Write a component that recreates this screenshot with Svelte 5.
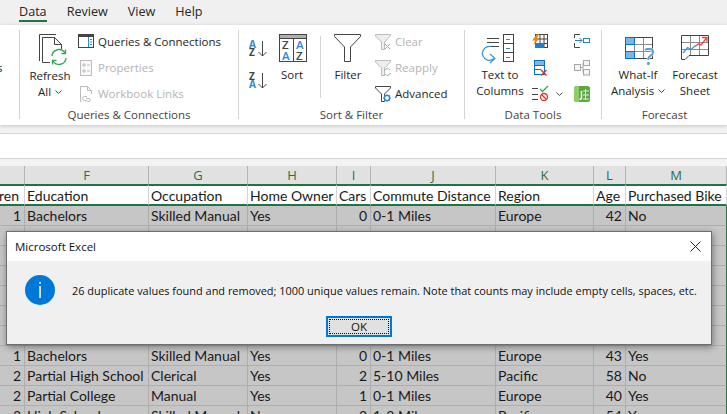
<script lang="ts">
	const letters = ['', 'F', 'G', 'H', 'I', 'J', 'K', 'L', 'M'];
	const header = ['Children', 'Education', 'Occupation', 'Home Owner', 'Cars', 'Commute Distance', 'Region', 'Age', 'Purchased Bike'];
	const blank = ['', '', '', '', '', '', '', '', ''];
	const rows = [
		['1', 'Bachelors', 'Skilled Manual', 'Yes', '0', '0-1 Miles', 'Europe', '42', 'No'],
		blank, blank, blank, blank, blank, blank,
		['1', 'Bachelors', 'Skilled Manual', 'Yes', '0', '0-1 Miles', 'Europe', '43', 'Yes'],
		['2', 'Partial High School', 'Clerical', 'Yes', '2', '5-10 Miles', 'Pacific', '58', 'No'],
		['2', 'Partial College', 'Manual', 'Yes', '1', '0-1 Miles', 'Europe', '40', 'Yes'],
		['3', 'High School', 'Skilled Manual', 'No', '2', '1-2 Miles', 'Pacific', '54', 'Yes']
	];
	// children, cars and age are right aligned
	const numeric = [0, 4, 7];
</script>

{#snippet chevron()}
	<svg class="chev" width="7" height="4" viewBox="0 0 7 4"><path d="M.5.5l3 3 3-3" fill="none" stroke="#444" /></svg>
{/snippet}

<div class="page">
	<nav class="tabs">
		<span class="tab active">Data</span>
		<span class="tab">Review</span>
		<span class="tab">View</span>
		<span class="tab">Help</span>
	</nav>

	<section class="ribbon">
		<div class="group cut"><span class="cut-text">s</span></div>

		<div class="group g1">
			<div class="body">
				<div class="big refresh">
					<svg width="40" height="38" viewBox="30 30 40 38">
						<g fill="none" stroke="#444">
							<path d="M39.5 61V34.5H56" />
							<path d="M42.5 62.5V37.5H54.5L61.5 44.5V49M54.5 37.5V44.5H61.5M42.5 62.5H50" />
						</g>
						<g fill="none" stroke="#3da35d" stroke-width="1.4">
							<path d="M52 56A7 7 0 0 1 65 53" />
							<path d="M66 58A7 7 0 0 1 53 61" />
							<path d="M65.5 49.5V53.5H61.5" />
							<path d="M52.5 64.5V60.5H56.5" />
						</g>
					</svg>
					<span>Refresh</span>
					<span>All {@render chevron()}</span>
				</div>
				<div class="small">
					<div class="item">
						<svg width="16" height="16" viewBox="0 0 16 16">
							<rect x=".5" y=".5" width="15" height="13" fill="#fff" stroke="#444" />
							<path d="M0 2h16" stroke="#444" stroke-width="2" />
							<path d="M10.5 3v10" stroke="#2b88d8" />
							<path d="M12 5.5h2M12 8h2M12 10.5h2" stroke="#2b88d8" />
						</svg>
						<span>Queries &amp; Connections</span>
					</div>
					<div class="item off">
						<svg width="16" height="16" viewBox="0 0 16 16">
							<rect x="2.5" y=".5" width="11" height="15" fill="#fafafa" stroke="#bbb" />
							<path d="M5 4h2v2H5zM5 10h2v2H5z" fill="none" stroke="#bbb" />
							<path d="M9 5h3M9 11h3" stroke="#bbb" />
						</svg>
						<span>Properties</span>
					</div>
					<div class="item off">
						<svg width="16" height="16" viewBox="0 0 16 16">
							<path d="M3.5 15.5H2.5V.5H9.5L13.5 4.5V8M9.5.5V4.5H13.5" fill="none" stroke="#bbb" />
							<path d="M9 10.5H6.5a2 2 0 0 0 0 4H9M8 12.5h3.5a2 2 0 0 1 0 3H9" fill="none" stroke="#bbb" />
						</svg>
						<span>Workbook Links</span>
					</div>
				</div>
			</div>
			<div class="label">Queries &amp; Connections</div>
		</div>

		<div class="group g2">
			<div class="body">
				<div class="sort-col">
					<svg width="18" height="19" viewBox="0 0 18 19">
						<text x="0" y="8" class="az blue">A</text>
						<text x="0" y="16" class="az dark">Z</text>
						<path d="M13.5 1v15M9.5 12l4 4 4-4" fill="none" stroke="#444" />
					</svg>
					<svg width="18" height="19" viewBox="0 0 18 19">
						<text x="0" y="8" class="az dark">Z</text>
						<text x="0" y="16" class="az blue">A</text>
						<path d="M13.5 1v15M9.5 12l4 4 4-4" fill="none" stroke="#444" />
					</svg>
				</div>
				<div class="big sort">
					<svg width="32" height="37" viewBox="276 30 32 37">
						<rect x="279.5" y="34.5" width="27" height="27" fill="#fff" stroke="#444" />
						<rect x="280" y="35" width="26" height="3" fill="#b0b0b0" />
						<path d="M293.5 38v23M280 38.5h26" stroke="#444" />
						<text x="282" y="49" class="az2 dark">Z</text>
						<text x="282" y="60" class="az2 blue">A</text>
						<text x="296" y="49" class="az2 blue">A</text>
						<text x="296" y="60" class="az2 dark">Z</text>
					</svg>
					<span>Sort</span>
				</div>
				<div class="vsep"></div>
				<div class="big filter">
					<svg width="32" height="37" viewBox="332 30 32 37">
						<path d="M334.5 34.5H360.5V36.5L350.5 47V61.5H344.5V47L334.5 36.5Z" fill="#fff" stroke="#444" />
					</svg>
					<span>Filter</span>
				</div>
				<div class="small filter-col">
					<div class="item off">
						<svg width="16" height="16" viewBox="0 0 16 16">
							<path d="M.5.5H15.5V2L9.5 8V15.5H6.5V8L.5 2Z" fill="#eee" stroke="#bbb" />
							<path d="M10 10l5 5M15 10l-5 5" stroke="#aaa" />
						</svg>
						<span>Clear</span>
					</div>
					<div class="item off">
						<svg width="16" height="16" viewBox="0 0 16 16">
							<path d="M.5.5H15.5V2L9.5 8V15.5H6.5V8L.5 2Z" fill="#eee" stroke="#bbb" />
							<path d="M9.5 11a3 3 0 0 1 5.5-1M15.5 13a3 3 0 0 1-5.5 1" fill="none" stroke="#aaa" />
						</svg>
						<span>Reapply</span>
					</div>
					<div class="item">
						<svg width="16" height="16" viewBox="0 0 16 16">
							<path d="M.5.5H15.5V2L9.5 8V15.5H6.5V8L.5 2Z" fill="#fff" stroke="#444" />
							<circle cx="12" cy="12" r="2.6" fill="#fff" stroke="#2b88d8" stroke-width="1.3" />
							<path d="M12 8v2M12 14v2M8 12h2M14 12h2M9.200 9.200l1.400 1.400M13.400 13.400l1.400 1.400M14.800 9.200l-1.400 1.400M10.600 13.400l-1.400 1.400" stroke="#2b88d8" />
						</svg>
						<span>Advanced</span>
					</div>
				</div>
			</div>
			<div class="label">Sort &amp; Filter</div>
		</div>

		<div class="group g3">
			<div class="body">
				<div class="big ttc">
					<svg width="60" height="37" viewBox="470 30 60 37">
						<path d="M487 38.5h12M487 42.5h12M487 46.5h12" stroke="#444" />
						<rect x="503.5" y="34.5" width="10" height="27" fill="#fff" stroke="#444" />
						<path d="M503 43.5h10M503 52.5h10" stroke="#444" />
						<path d="M506 39.5h4M506 48.5h4M506 57.5h4" stroke="#2b88d8" />
						<path d="M491 46.5C484 46 481 52 483 56C485 60 489 62 494 58.5M490 54L495 58.5L490 63" fill="none" stroke="#3d94dc" stroke-width="1.2" />
					</svg>
					<span>Text to</span>
					<span>Columns</span>
				</div>
				<div class="small tools">
					<div class="item">
						<svg width="16" height="16" viewBox="0 0 16 16">
							<rect x="3.5" y=".5" width="12" height="13" fill="#fff" stroke="#444" />
							<path d="M3.5 5h12M3.5 9.5h12M8 .5v13M12 .5v13" stroke="#444" />
							<rect x="3" y="9" width="9" height="5" fill="#1f7fcf" />
							<path d="M5 0L0 6.500h3L1.500 11L7.500 4.500H5L7 0Z" fill="#e8890c" />
						</svg>
					</div>
					<div class="item">
						<svg width="16" height="16" viewBox="0 0 16 16">
							<rect x="2.500" y=".5" width="10" height="14" fill="#fff" stroke="#0b6fc2" />
							<rect x="3" y="1" width="9" height="4" fill="#7fb4e6" />
							<path d="M3 5.500h9M3 9.500h6" stroke="#0b6fc2" />
							<path d="M9 10l5.500 5.500M14.500 10L9 15.500" stroke="#d9342b" stroke-width="1.400" />
						</svg>
					</div>
					<div class="item validate">
						<svg width="18" height="16" viewBox="0 0 18 16">
							<path d="M0 2.500h6M0 8.500h6M0 13.500h6" stroke="#444" />
							<path d="M8 3L10.500 5.500L16 0" fill="none" stroke="#3da35d" stroke-width="1.300" />
							<circle cx="12" cy="11" r="3.500" fill="#fff" stroke="#d9342b" stroke-width="1.300" />
							<path d="M9.500 8.500L14.500 13.500" stroke="#d9342b" stroke-width="1.300" />
						</svg>
						{@render chevron()}
					</div>
				</div>
				<div class="small tools2">
					<div class="item">
						<svg width="16" height="16" viewBox="0 0 16 16">
							<path d="M6 .5H.5V4M.5 9v4.500H6" fill="none" stroke="#444" />
							<path d="M1 6.500h7M5.500 4L8 6.500L5.500 9" fill="none" stroke="#1f7fcf" />
							<rect x="9.500" y="4.500" width="6" height="4" fill="#fff" stroke="#1f7fcf" />
						</svg>
					</div>
					<div class="item">
						<svg width="16" height="16" viewBox="0 0 16 16">
							<g fill="#f4f4f4" stroke="#a6a6a6">
								<rect x=".5" y="4.500" width="6" height="6" />
								<rect x="9.500" y=".5" width="6" height="5" />
								<rect x="9.500" y="9.500" width="6" height="5.500" />
							</g>
							<path d="M7 7.500h2M9 3v9.500" stroke="#a6a6a6" />
						</svg>
					</div>
					<div class="item">
						<svg width="16" height="16" viewBox="0 0 16 16">
							<rect width="16" height="16" rx="2.500" fill="#5aa83f" />
							<path d="M0 3Q0 0 3 0H5V16H3Q0 16 0 13Z" fill="#8ccf6a" />
							<path d="M9 5h6M9 9h6M9 13h6M11.500 3v11" stroke="#dff0d4" />
							<path d="M7.500 5V11.500Q7.500 13.500 5.500 13.500" fill="none" stroke="#fff" stroke-width="1.500" />
						</svg>
					</div>
				</div>
			</div>
			<div class="label">Data Tools</div>
		</div>

		<div class="group g4">
			<div class="body">
				<div class="big whatif">
					<svg width="60" height="37" viewBox="608 30 60 37">
						<rect x="625.500" y="37.500" width="27" height="21" fill="#fff" stroke="#444" />
						<path d="M634.500 38v20M643.500 38v20M626 44.500h26M626 51.500h26" stroke="#8a8a8a" />
						<rect x="625.500" y="37.500" width="9" height="7" fill="#7fb4e6" stroke="#0b6fc2" />
						<rect x="625.500" y="51.500" width="9" height="7" fill="#7fb4e6" stroke="#0b6fc2" />
						<text x="644" y="65" class="ask">?</text>
					</svg>
					<span>What-If</span>
					<span>Analysis {@render chevron()}</span>
				</div>
				<div class="big forecast">
					<svg width="54" height="37" viewBox="668 30 54 37">
						<path d="M681.500 35.500H708.500V55.500H689L685 59.500H681.500Z" fill="#fff" stroke="#444" />
						<path d="M690.500 36v19M699.500 36v19M682 42.500h26M682 49.500h26" stroke="#8a8a8a" />
						<path d="M683 53L687.500 47.500L691 49.500L695 46" fill="none" stroke="#3d94dc" stroke-width="1.300" />
						<path d="M695 46.500L699 43.500L701 45L706.500 38M702 37.500H707V42.500" fill="none" stroke="#e8483f" stroke-width="1.300" />
					</svg>
					<span>Forecast</span>
					<span>Sheet</span>
				</div>
			</div>
			<div class="label">Forecast</div>
		</div>
	</section>

	<div class="formula"></div>

	<div class="sheet">
		{#each letters as letter}
			<div class="letter">{letter}</div>
		{/each}
		{#each header as title, i}
			<div class="cell head" class:first={i === 0}><span>{title}</span></div>
		{/each}
		{#each rows as row}
			{#each row as value, i}
				<div class="cell sel" class:num={numeric.includes(i)}>{value}</div>
			{/each}
		{/each}
	</div>

	<div class="dialog">
		<div class="title">
			<span>Microsoft Excel</span>
			<svg width="11" height="11" viewBox="0 0 11 11"><path d="M.5.5l10 10M10.500.5l-10 10" stroke="#222" /></svg>
		</div>
		<div class="content">
			<div class="message">
				<svg width="30" height="30" viewBox="0 0 30 30">
					<circle cx="15" cy="15" r="15" fill="#0078d7" />
					<rect x="14.300" y="7" width="1.500" height="1.700" fill="#fff" />
					<rect x="14.300" y="11" width="1.500" height="12" fill="#fff" />
				</svg>
				<p>26 duplicate values found and removed; 1000 unique values remain. Note that counts may include empty cells, spaces, etc.</p>
			</div>
			<button class="ok"><span>OK</span></button>
		</div>
	</div>
</div>

<style>
	:global(body) {
		margin: 0;
	}

	.page {
		position: relative;
		width: 727px;
		height: 414px;
		overflow: hidden;
		background: #f3f3f3;
		color: #262626;
		font-family: 'Open Sans', sans-serif;
		font-size: 11.5px;
	}

	.page svg {
		overflow: visible;
	}

	.tabs {
		display: flex;
		gap: 20px;
		height: 25px;
		padding-left: 19px;
		box-sizing: border-box;
		background: #f0f0f0;
		font-size: 12.6px;
		line-height: 20px;
	}

	.tab {
		height: 18px;
		padding-top: 2px;
	}

	.active {
		border-bottom: 2px solid #217346;
		font-weight: 500;
	}

	.ribbon {
		display: flex;
		height: 100px;
		padding-top: 5px;
		box-sizing: border-box;
		background: #fff;
		box-shadow: 0 1px 4px rgba(0, 0, 0, 0.2);
		position: relative;
	}

	.group {
		display: flex;
		flex-direction: column;
		height: 89px;
		box-sizing: border-box;
		border-right: 1px solid #d4d4d4;
	}

	.cut {
		width: 20px;
		border-right: 0;
	}

	.cut-text {
		margin: 30px 0 0 -3px;
		line-height: 16px;
	}

	.g1 {
		width: 220px;
		margin-left: -1px;
		border-left: 1px solid #d4d4d4;
	}

	.g2 {
		width: 226px;
	}

	.g3 {
		width: 137px;
	}

	.g4 {
		flex: 1;
		border-right: 0;
	}

	.body {
		display: flex;
		height: 80px;
	}

	.label {
		height: 9px;
		line-height: 10px;
		text-align: center;
		color: #444;
		white-space: nowrap;
	}

	.big {
		display: flex;
		flex-direction: column;
		align-items: center;
		flex-shrink: 0;
		line-height: 16px;
		white-space: nowrap;
	}

	.big svg:not(.chev) {
		display: block;
	}

	.chev {
		vertical-align: 2px;
		margin-left: 1px;
	}

	.small {
		display: flex;
		flex-direction: column;
		margin-top: -1px;
	}

	.item {
		display: flex;
		align-items: center;
		gap: 4px;
		height: 26px;
		white-space: nowrap;
	}

	.item span {
		padding-bottom: 2px;
	}

	.off {
		color: #b4b4b4;
	}

	.refresh {
		width: 40px;
		margin-left: 10px;
	}

	.g1 .small {
		margin-left: 8px;
	}

	.sort-col {
		display: flex;
		flex-direction: column;
		gap: 13px;
		margin: 10px 0 0 10px;
		width: 18px;
	}

	.sort-col svg {
		display: block;
	}

	.sort {
		width: 32px;
		margin-left: 9px;
	}

	.vsep {
		width: 1px;
		height: 62px;
		margin: 6px 11px 0 12px;
		background: #d4d4d4;
	}

	.filter {
		width: 32px;
	}

	.filter-col {
		margin-left: 11px;
	}

	.ttc {
		width: 60px;
		margin-left: 5px;
	}

	.tools {
		width: 42px;
		margin-left: 2px;
	}

	.validate {
		gap: 5px;
	}

	.whatif {
		width: 60px;
		margin-left: 6px;
	}

	.forecast {
		width: 54px;
	}

	.az {
		font-size: 10px;
		font-weight: 700;
	}

	.az2 {
		font-size: 11.5px;
		font-weight: 600;
	}

	.blue {
		fill: #2b88d8;
	}

	.dark {
		fill: #444;
	}

	.ask {
		font-size: 24px;
		fill: #4a9fe0;
		stroke: #fff;
		stroke-width: 1px;
		paint-order: stroke;
	}

	.formula {
		height: 24px;
		margin-top: 8px;
		background: #fff;
		border-top: 1px solid #d4d4d4;
		border-bottom: 1px solid #d4d4d4;
	}

	.sheet {
		display: grid;
		grid-template-columns: 25px 124px 99px 89px 34px 125px 98px 32px 101px;
		grid-template-rows: 18px 22px;
		grid-auto-rows: 20px;
		margin-top: 7px;
		font-family: Lato, sans-serif;
		font-size: 14px;
		color: #1a1a1a;
	}

	.letter {
		box-sizing: border-box;
		background: #e1e1e1;
		border-right: 1px solid #b5b5b5;
		color: #217346;
		text-align: center;
		line-height: 18px;
		font-size: 13px;
		font-family: 'Open Sans', sans-serif;
	}

	.cell {
		box-sizing: border-box;
		padding: 0 2px;
		overflow: hidden;
		white-space: nowrap;
		line-height: 19px;
		border-right: 1px solid #aeaeae;
		border-bottom: 1px solid #aeaeae;
	}

	.head {
		background: #fff;
		border-top: 2px solid #217346;
		border-bottom: 2px solid #217346;
		border-right-color: #d4d4d4;
		line-height: 20px;
	}

	.first {
		display: flex;
		justify-content: flex-end;
		padding-right: 5px;
	}

	.first span {
		flex-shrink: 0;
	}

	.sel {
		background: #c6c6c6;
	}

	.sel:nth-child(9n + 9) {
		border-right: 1px solid #217346;
	}

	.num {
		text-align: right;
		padding-right: 3px;
	}

	.dialog {
		position: absolute;
		left: 6px;
		top: 231px;
		width: 706px;
		height: 114px;
		box-sizing: border-box;
		display: flex;
		flex-direction: column;
		background: #f0f0f0;
		border: 1px solid #6e6e6e;
		box-shadow: 1px 2px 7px rgba(0, 0, 0, 0.4);
		font-size: 11.5px;
		color: #111;
	}

	.title {
		display: flex;
		align-items: center;
		justify-content: space-between;
		height: 29px;
		padding: 0 10px 0 8px;
		background: #fff;
		flex-shrink: 0;
	}

	.content {
		display: flex;
		flex-direction: column;
		align-items: center;
	}

	.message {
		display: flex;
		align-items: center;
		gap: 17px;
		width: 100%;
		box-sizing: border-box;
		padding: 14px 0 0 18px;
	}

	.message svg {
		flex-shrink: 0;
	}

	.message p {
		margin: 0;
		white-space: nowrap;
		font-size: 10.95px;
	}

	.ok {
		width: 66px;
		height: 21px;
		margin-top: 11px;
		padding: 1px;
		box-sizing: border-box;
		border: 2px solid #0078d7;
		background: #e1e1e1;
		font: inherit;
		color: #111;
	}

	.ok span {
		display: block;
		height: 100%;
		box-sizing: border-box;
		border: 1px dotted #111;
		line-height: 13px;
	}
</style>
